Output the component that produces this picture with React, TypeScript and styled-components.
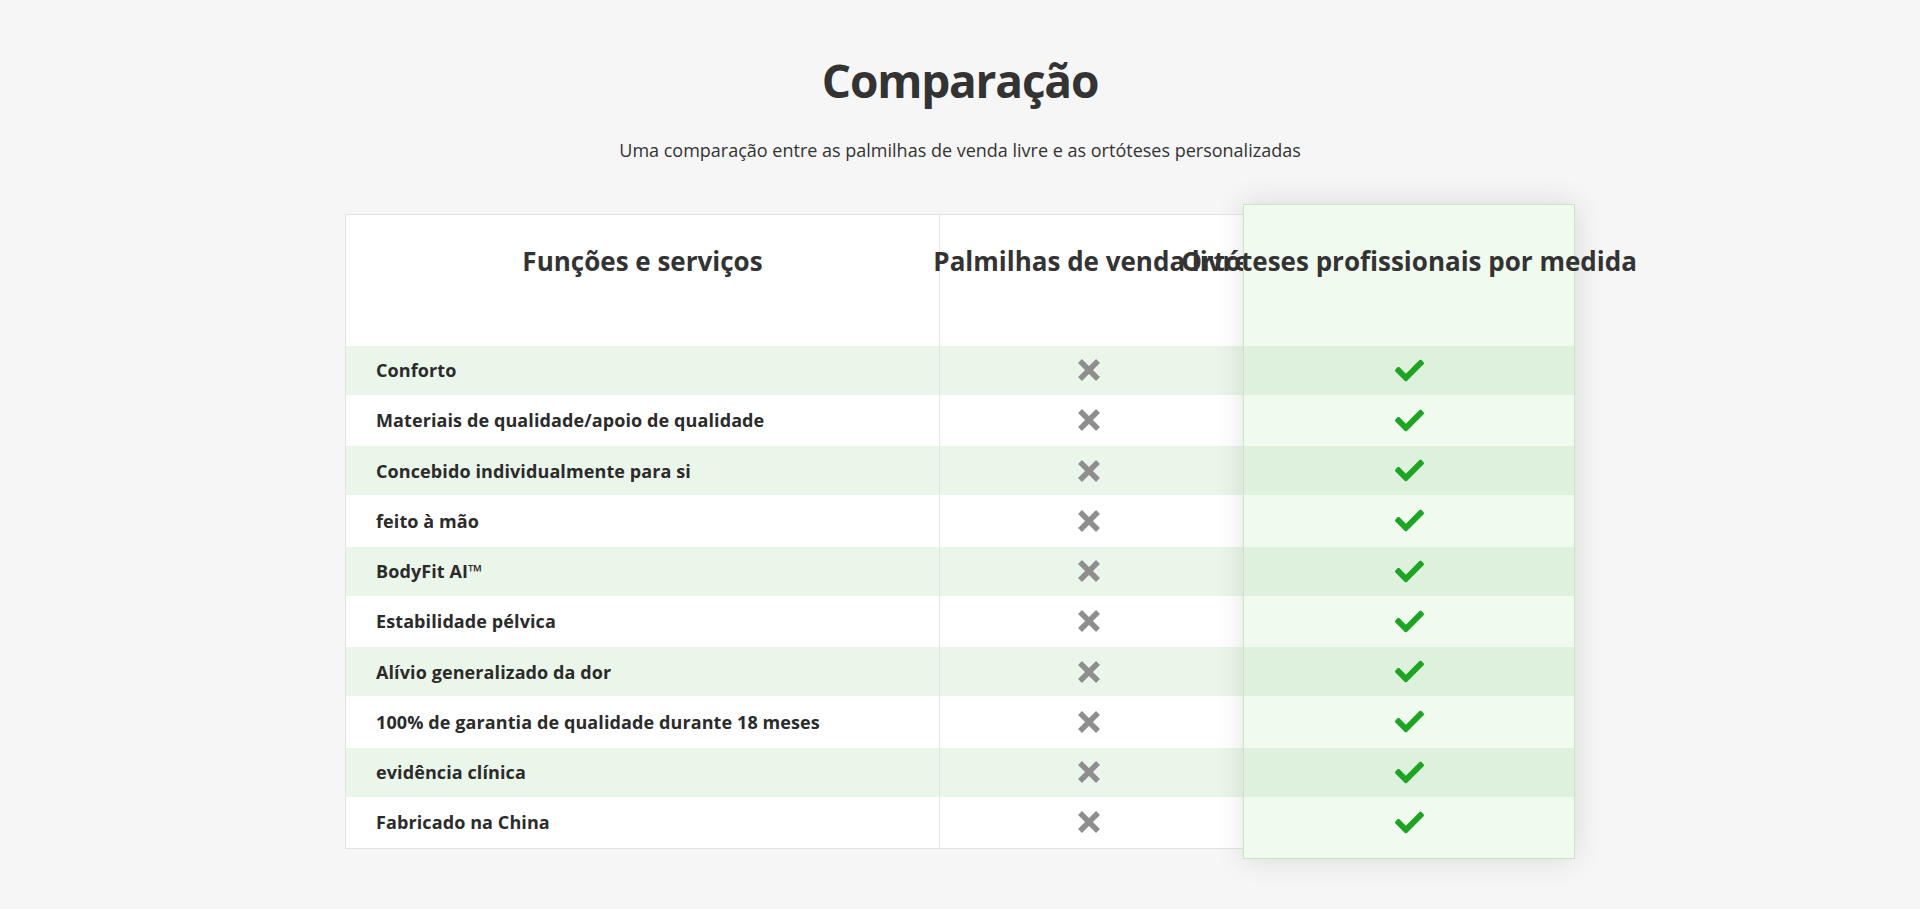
import React from "react";
import styled, { createGlobalStyle } from "styled-components";
import { FaCheck } from "react-icons/fa";

const GlobalStyle = createGlobalStyle`
  body {
    margin: 0;
    background: #f6f6f6;
    font-family: "Open Sans", "Noto Sans", sans-serif;
    color: #333;
  }
`;

const features = [
  "Conforto",
  "Materiais de qualidade/apoio de qualidade",
  "Concebido individualmente para si",
  "feito à mão",
  "BodyFit AI™",
  "Estabilidade pélvica",
  "Alívio generalizado da dor",
  "100% de garantia de qualidade durante 18 meses",
  "evidência clínica",
  "Fabricado na China",
];

const Cross = () => (
  <svg width="24" height="24" viewBox="0 0 24 24">
    <path d="M3 3L21 21M21 3L3 21" stroke="#8e8e8e" strokeWidth="5.5" fill="none" />
  </svg>
);

const App: React.FC = () => {
  return (
    <>
      <GlobalStyle />
      <Section>
        <Title>Comparação</Title>
        <Subtitle>Uma comparação entre as palmilhas de venda livre e as ortóteses personalizadas</Subtitle>
        <Table>
          <Grid>
            <HeadCell divider>Funções e serviços</HeadCell>
            <HeadCell>Palmilhas de venda livre</HeadCell>
            {features.map((name, i) => (
              <React.Fragment key={name}>
                <LabelCell shaded={i % 2 === 0}>{name}</LabelCell>
                <IconCell shaded={i % 2 === 0}>
                  <Cross />
                </IconCell>
              </React.Fragment>
            ))}
          </Grid>
          <Highlight>
            <HighlightHead>Ortóteses profissionais por medida</HighlightHead>
            {features.map((name, i) => (
              <HighlightCell key={name} shaded={i % 2 === 0}>
                <FaCheck size={29} color="#1ca522" />
              </HighlightCell>
            ))}
          </Highlight>
        </Table>
      </Section>
    </>
  );
};

export default App;

const Section = styled.section`
  display: flex;
  flex-direction: column;
  align-items: center;
  padding: 52px 0 60px;
`;

const Title = styled.h2`
  margin: 0;
  font-size: 46px;
  line-height: 57.6px;
  font-weight: 700;
  color: #333;
  letter-spacing: -1.2px;
`;

const Subtitle = styled.p`
  margin: 27px 0 0;
  font-size: 18px;
  line-height: 27px;
  color: #333;
`;

const Table = styled.div`
  display: flex;
  margin-top: 40px;
  width: 1230px;
`;

const Grid = styled.div`
  display: grid;
  grid-template-columns: 594px 303px;
  grid-template-rows: 131px repeat(5, 49px 51.5px);
  margin: 10px 0;
  background: #fff;
  border: 1px solid #e3e3e3;
  border-right: none;
`;

const HeadCell = styled.div<{ divider?: boolean }>`
  display: flex;
  justify-content: center;
  min-width: 0;
  padding-top: 28px;
  font-size: 26px;
  line-height: 36px;
  font-weight: 700;
  white-space: nowrap;
  color: #333;
  border-right: ${({ divider }) => (divider ? "1px solid #e3e3e3" : "none")};
`;

const LabelCell = styled.div<{ shaded: boolean }>`
  display: flex;
  align-items: center;
  padding-left: 30px;
  font-size: 18px;
  font-weight: 700;
  color: #2b2b2b;
  letter-spacing: 0.1px;
  background: ${({ shaded }) => (shaded ? "#ebf6ea" : "#fff")};
  border-right: 1px solid #e3e3e3;
`;

const IconCell = styled.div<{ shaded: boolean }>`
  display: flex;
  align-items: center;
  justify-content: center;
  padding-right: 6px;
  background: ${({ shaded }) => (shaded ? "#ebf6ea" : "#fff")};
`;

const Highlight = styled.div`
  display: grid;
  grid-template-columns: minmax(0, 1fr);
  grid-template-rows: 141px repeat(5, 49px 51.5px);
  width: 332px;
  box-sizing: border-box;
  padding-bottom: 10px;
  background: #f1faef;
  border: 1px solid #c8e6c3;
  box-shadow: 0 0 28px rgba(0, 0, 0, 0.12);
  position: relative;
`;

const HighlightHead = styled.div`
  display: flex;
  justify-content: center;
  min-width: 0;
  padding-top: 38px;
  font-size: 26px;
  line-height: 36px;
  font-weight: 700;
  white-space: nowrap;
  color: #333;
`;

const HighlightCell = styled.div<{ shaded: boolean }>`
  display: flex;
  align-items: center;
  justify-content: center;
  background: ${({ shaded }) => (shaded ? "#ddf1dc" : "transparent")};
`;
